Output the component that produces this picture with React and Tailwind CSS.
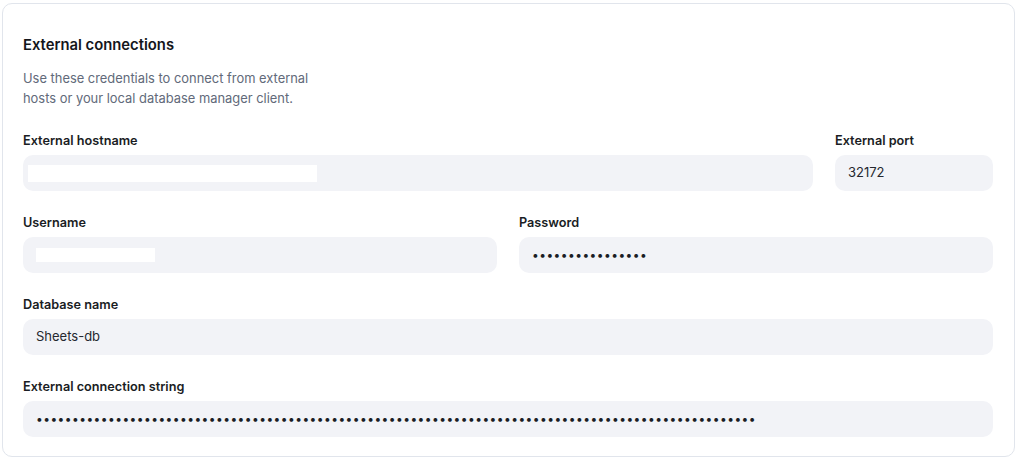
export default function App() {
  const Field = ({ label, children, className = "" }) => (
    <div className={"flex flex-col gap-[6px] " + className}>
      <div className="text-[12.7px] leading-[16px] font-semibold text-[#1a1d24]">{label}</div>
      <div className="h-[36px] rounded-[10px] bg-[#f2f3f7] flex items-center px-[13px] text-[13px] text-[#25282f]">
        {children}
      </div>
    </div>
  );
  const Dots = ({ n }) => (
    <span className="tracking-[0.45px] text-[12px] text-[#1a1d24]">{"•".repeat(n)}</span>
  );
  return (
    <div className="w-[1022px] h-[470px] bg-white pl-[2px] pt-[3px] pr-[7px]" style={{ fontFamily: "Inter, 'Noto Sans', sans-serif" }}>
      <div className="w-[1013px] rounded-[10px] border border-[#e1e5ec] pl-[20px] pr-[21px] pt-[29px] pb-[19px]">
        <div className="text-[14.8px] leading-[24px] font-semibold text-[#14161b]">External connections</div>
        <div className="mt-[12px] w-[300px] text-[12.9px] leading-[20px] text-[#626a7a]">
          Use these credentials to connect from external hosts or your local database manager client.
        </div>
        <div className="mt-[24px] flex flex-col gap-[24px]">
          <div className="flex gap-[22px]">
            <Field label="External hostname" className="flex-1">
              <div className="ml-[-8px] w-[289px] h-[17px] bg-white" />
            </Field>
            <Field label="External port" className="w-[158px]">32172</Field>
          </div>
          <div className="flex gap-[22px]">
            <Field label="Username" className="flex-1">
              <div className="w-[119px] h-[14px] bg-white" />
            </Field>
            <Field label="Password" className="flex-1"><Dots n={16} /></Field>
          </div>
          <Field label="Database name">Sheets-db</Field>
          <Field label="External connection string"><Dots n={100} /></Field>
        </div>
      </div>
    </div>
  );
}
